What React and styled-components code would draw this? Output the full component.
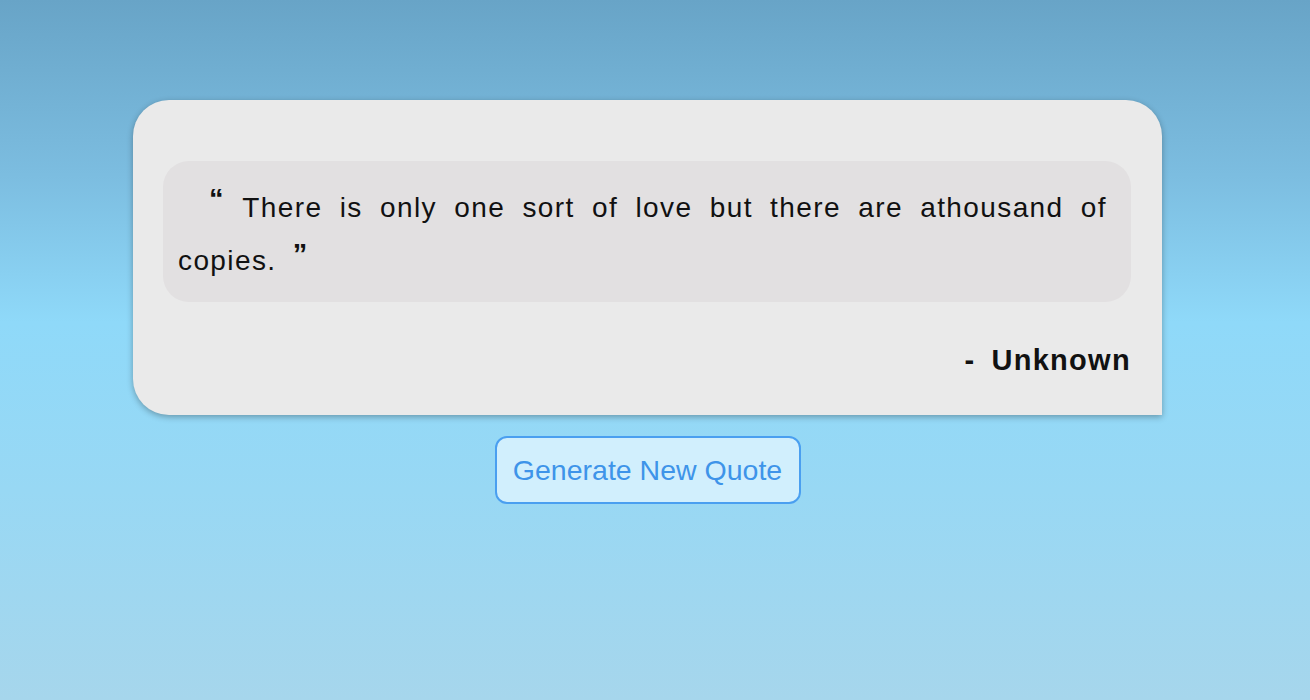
import React from "react";
import styled, { createGlobalStyle } from "styled-components";

const Global = createGlobalStyle`
  html, body { margin: 0; padding: 0; }
  body {
    min-height: 700px;
    background: linear-gradient(to bottom, #68a4c7 0%, #7cbde0 25%, #8fd9f9 46%, #98d8f4 70%, #a6d6ec 100%);
    font-family: "Liberation Sans", Arial, sans-serif;
  }
`;

const Page = styled.main`
  min-height: 700px;
  box-sizing: border-box;
  padding: 100px 15px 0 0;
  display: flex;
  flex-direction: column;
  align-items: center;
  gap: 21px;
`;

const Card = styled.section`
  width: 1029px;
  height: 315px;
  box-sizing: border-box;
  background: #eaeaea;
  border-radius: 36px 36px 0 36px;
  box-shadow: 0 2px 6px rgba(0, 0, 0, 0.3);
  padding: 61px 31px 0 30px;
  display: flex;
  flex-direction: column;
`;

const QuoteBox = styled.blockquote`
  margin: 0;
  background: #e2e0e1;
  border-radius: 26px;
  padding: 20px 24px 15px 15px;
  font-size: 28px;
  line-height: 53px;
  letter-spacing: 1.4px;
  word-spacing: 4px;
  text-align: justify;
  color: #111;
`;

const Mark = styled.span`
  font-size: 29px;
  line-height: 0;
  font-weight: bold;
  letter-spacing: 0;
  vertical-align: ${(p) => (p.$open ? "8px" : "6px")};
  margin: ${(p) => (p.$open ? "0 2px 0 31px" : "0 0 0 3px")};
`;

const Author = styled.p`
  margin: 42px 0 0;
  text-align: right;
  font-size: 29px;
  font-weight: bold;
  letter-spacing: 1.3px;
  color: #111;
`;

const Dash = styled.span`
  margin-right: 16px;
`;

const Button = styled.button`
  height: 68px;
  width: 306px;
  box-sizing: border-box;
  background: #d1effd;
  border: 2px solid #4a9ff0;
  border-radius: 12px;
  color: #3e94e9;
  font-family: "Liberation Sans", Arial, sans-serif;
  font-size: 28.5px;
  cursor: pointer;
`;

export default function App() {
  return (
    <>
      <Global />
      <Page>
        <Card>
          <QuoteBox>
            <Mark $open>“</Mark> There is only one sort of love but there are athousand of copies. <Mark>”</Mark>
          </QuoteBox>
          <Author>
            <Dash>-</Dash>Unknown
          </Author>
        </Card>
        <Button>Generate New Quote</Button>
      </Page>
    </>
  );
}
